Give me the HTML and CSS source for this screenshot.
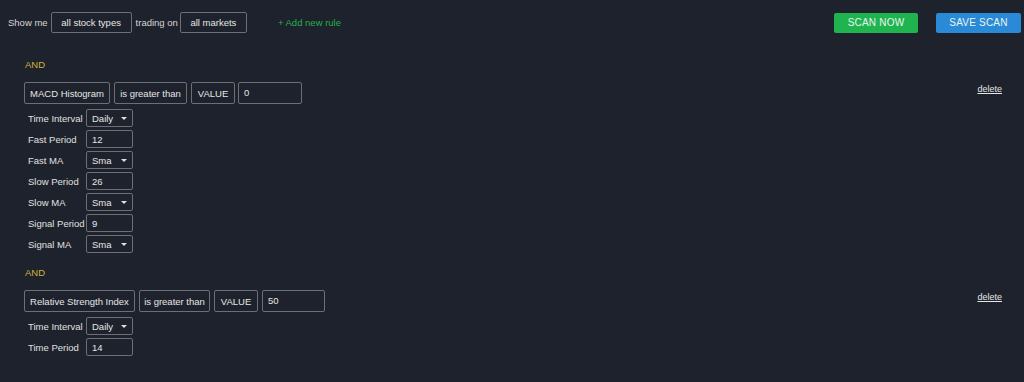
FILE: index.html
```html
<!DOCTYPE html>
<html>
<head>
<meta charset="utf-8">
<link rel="stylesheet" href="styles.css">
</head>
<body>
<div class="topbar">
  <span class="lbl">Show me</span>
  <span class="box pill p1">all stock types</span>
  <span class="lbl">trading on</span>
  <span class="box pill p2">all markets</span>
  <a class="add">+ Add new rule</a>
  <div class="spacer"></div>
  <span class="btn green">SCAN NOW</span>
  <span class="btn blue">SAVE SCAN</span>
</div>

<div class="rules">
  <div class="rule">
    <div class="and">AND</div>
    <div class="cond">
      <span class="box c1">MACD Histogram</span>
      <span class="box c2">is greater than</span>
      <span class="box c3">VALUE</span>
      <span class="box inp c4">0</span>
      <a class="delete">delete</a>
    </div>
    <div class="params">
      <span class="plbl">Time Interval</span><span class="ctl sel">Daily<i class="caret"></i></span>
      <span class="plbl">Fast Period</span><span class="ctl">12</span>
      <span class="plbl">Fast MA</span><span class="ctl sel">Sma<i class="caret"></i></span>
      <span class="plbl">Slow Period</span><span class="ctl">26</span>
      <span class="plbl">Slow MA</span><span class="ctl sel">Sma<i class="caret"></i></span>
      <span class="plbl">Signal Period</span><span class="ctl">9</span>
      <span class="plbl">Signal MA</span><span class="ctl sel">Sma<i class="caret"></i></span>
    </div>
  </div>

  <div class="rule">
    <div class="and">AND</div>
    <div class="cond">
      <span class="box d1">Relative Strength Index</span>
      <span class="box d2">is greater than</span>
      <span class="box c3">VALUE</span>
      <span class="box inp d4">50</span>
      <a class="delete">delete</a>
    </div>
    <div class="params">
      <span class="plbl">Time Interval</span><span class="ctl sel">Daily<i class="caret"></i></span>
      <span class="plbl">Time Period</span><span class="ctl">14</span>
    </div>
  </div>
</div>
</body>
</html>
```

FILE: styles.css
```css
html, body {
  margin: 0;
  background: #1e222c;
}
body {
  font-family: "Liberation Sans", Arial, sans-serif;
  font-size: 9.5px;
  color: #e2e2e2;
  height: 382px;
  overflow: hidden;
  white-space: nowrap;
}
.topbar {
  display: flex;
  align-items: center;
  padding: 12px 3px 0 8px;
  height: 21px;
}
.lbl { color: #d6d6d6; }
.box {
  display: inline-flex;
  align-items: center;
  box-sizing: border-box;
  border: 1px solid #6c6f76;
  border-radius: 2px;
  color: #e6e6e6;
  white-space: nowrap;
}
.pill {
  height: 21px;
  justify-content: center;
}
.p1 { width: 81px; margin: 0 4px 0 3px; }
.p2 { width: 67px; margin: 0 0 0 2px; }
.add {
  color: #22b14c;
  margin-left: 31px;
}
.spacer { flex: 1; }
.btn {
  display: inline-flex;
  align-items: center;
  justify-content: center;
  height: 20px;
  border-radius: 2px;
  color: #eaf6ee;
  font-size: 10px;
  letter-spacing: 0.2px;
}
.green { background: #1fb450; width: 84px; margin-right: 18px; }
.blue { background: #2a8ad8; width: 85px; }

.rules {
  padding: 26px 22px 0 24px;
}
.rule { margin-bottom: 14px; }
.and {
  color: #cdb23e;
  height: 12px;
  line-height: 12px;
  margin-bottom: 11px;
  padding-left: 1px;
}
.cond {
  display: flex;
  align-items: center;
  gap: 4px;
  height: 22px;
}
.cond .box {
  height: 22px;
  justify-content: center;
}
.c1 { width: 86px; }
.c2 { width: 73px; }
.c3 { width: 44px; }
.c4 { width: 64px; margin-left: -1px; }
.d1 { width: 111px; }
.d2 { width: 71px; }
.d4 { width: 63px; }
.cond .inp {
  justify-content: flex-start;
  align-items: flex-start;
  padding: 4px 5px 0;
}
.delete {
  margin-left: auto;
  align-self: flex-start;
  margin-top: 2px;
  color: #e6e6e6;
  text-decoration: underline;
  font-size: 9px;
}
.params {
  display: grid;
  grid-template-columns: 58px 47px;
  grid-auto-rows: 18px;
  row-gap: 3px;
  margin-top: 5px;
  padding-left: 4px;
  align-items: center;
}
.plbl { color: #e0e0e0; }
.ctl {
  box-sizing: border-box;
  height: 18px;
  border: 1px solid #6c6f76;
  border-radius: 2px;
  padding: 0 5px;
  display: flex;
  align-items: center;
  position: relative;
  color: #e6e6e6;
}
.caret {
  position: absolute;
  right: 5px;
  top: 7px;
  width: 0;
  height: 0;
  border-left: 3px solid transparent;
  border-right: 3px solid transparent;
  border-top: 3px solid #e0e0e0;
}
```
